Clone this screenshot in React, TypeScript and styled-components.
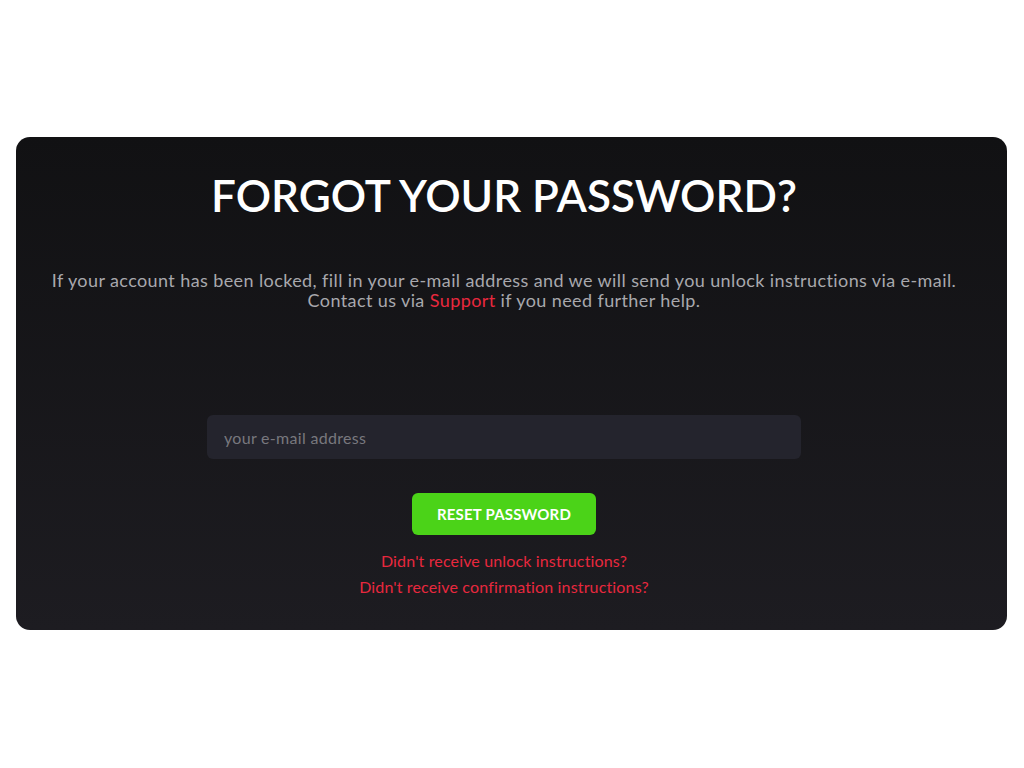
import React from "react";
import styled, { createGlobalStyle } from "styled-components";

const GlobalStyle = createGlobalStyle`
  html, body { margin: 0; padding: 0; background: #ffffff; }
  body { font-family: "Lato", "Liberation Sans", sans-serif; }
  * { box-sizing: border-box; }
`;

const Page = styled.div`
  width: 1024px;
  height: 768px;
  padding: 137px 17px 0 16px;
`;

const Card = styled.section`
  height: 493px;
  border-radius: 14px;
  background: linear-gradient(180deg, #111113 0%, #1d1c21 100%);
  padding: 31px 35px 30px 20px;
  display: flex;
  flex-direction: column;
  align-items: center;
`;

const Title = styled.h1`
  margin: 0;
  font-size: 44px;
  line-height: 54px;
  font-weight: 600;
  color: #ffffff;
  letter-spacing: 0;
`;

const Intro = styled.p`
  margin: 48px 0 0;
  font-size: 18px;
  line-height: 20px;
  letter-spacing: 0.4px;
  color: #a8a8ad;
  text-align: center;
  white-space: nowrap;
`;

const RedLink = styled.a`
  color: #e8283e;
  text-decoration: none;
  cursor: pointer;
`;

const Form = styled.form`
  margin-top: 105px;
  display: flex;
  flex-direction: column;
  align-items: center;
`;

const EmailInput = styled.input`
  width: 594px;
  height: 44px;
  border: none;
  outline: none;
  border-radius: 6px;
  background: #24242d;
  padding: 0 17px;
  font-family: "Lato", "Liberation Sans", sans-serif;
  font-size: 16px;
  letter-spacing: 0.3px;
  color: #d0d0d4;
  &::placeholder { color: #78787e; }
`;

const SubmitButton = styled.button`
  margin-top: 34px;
  width: 184px;
  height: 42px;
  border: none;
  border-radius: 6px;
  background: #4bd318;
  color: #ffffff;
  font-family: "Lato", "Liberation Sans", sans-serif;
  font-size: 15px;
  font-weight: 700;
  letter-spacing: 0.2px;
  text-transform: uppercase;
  cursor: pointer;
`;

const Links = styled.div`
  margin-top: 13px;
  display: flex;
  flex-direction: column;
  align-items: center;
`;

const HelpLink = styled(RedLink)`
  font-size: 16px;
  line-height: 26px;
  letter-spacing: 0.15px;
`;

export default function App() {
  return (
    <>
      <GlobalStyle />
      <Page>
        <Card>
          <Title>FORGOT YOUR PASSWORD?</Title>
          <Intro>
            If your account has been locked, fill in your e-mail address and we will send you unlock instructions via e-mail.
            <br />
            Contact us via <RedLink>Support</RedLink> if you need further help.
          </Intro>
          <Form onSubmit={(e) => e.preventDefault()}>
            <EmailInput type="email" placeholder="your e-mail address" />
            <SubmitButton type="submit">Reset Password</SubmitButton>
          </Form>
          <Links>
            <HelpLink>Didn't receive unlock instructions?</HelpLink>
            <HelpLink>Didn't receive confirmation instructions?</HelpLink>
          </Links>
        </Card>
      </Page>
    </>
  );
}
